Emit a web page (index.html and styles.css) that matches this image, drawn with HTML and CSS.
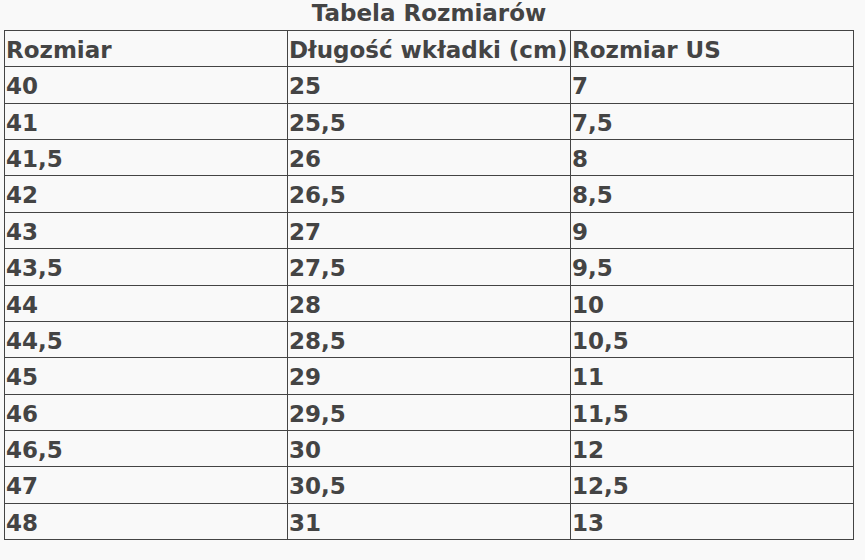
FILE: index.html
```html
<!DOCTYPE html>
<html lang="pl">
<head>
<meta charset="utf-8">
<title>Tabela Rozmiarów</title>
<link rel="stylesheet" href="styles.css">
</head>
<body>
<div class="wrap">
  <h1 class="title">Tabela Rozmiarów</h1>
  <table class="sizes">
    <thead>
      <tr><th>Rozmiar</th><th>Długość wkładki (cm)</th><th>Rozmiar US</th></tr>
    </thead>
    <tbody>
      <tr><td>40</td><td>25</td><td>7</td></tr>
      <tr><td>41</td><td>25,5</td><td>7,5</td></tr>
      <tr><td>41,5</td><td>26</td><td>8</td></tr>
      <tr><td>42</td><td>26,5</td><td>8,5</td></tr>
      <tr><td>43</td><td>27</td><td>9</td></tr>
      <tr><td>43,5</td><td>27,5</td><td>9,5</td></tr>
      <tr><td>44</td><td>28</td><td>10</td></tr>
      <tr><td>44,5</td><td>28,5</td><td>10,5</td></tr>
      <tr><td>45</td><td>29</td><td>11</td></tr>
      <tr><td>46</td><td>29,5</td><td>11,5</td></tr>
      <tr><td>46,5</td><td>30</td><td>12</td></tr>
      <tr><td>47</td><td>30,5</td><td>12,5</td></tr>
      <tr><td>48</td><td>31</td><td>13</td></tr>
    </tbody>
  </table>
</div>
</body>
</html>
```
FILE: styles.css
```css
html, body {
  margin: 0;
  padding: 0;
  background: #f9f9f9;
}
body {
  font-family: "DejaVu Sans", "Noto Sans", sans-serif;
  color: #444444;
}
.wrap {
  width: 850px;
  padding-left: 4px;
}
.title {
  margin: 0 0 3px;
  font-size: 23px;
  font-weight: bold;
  line-height: 27px;
  text-align: center;
  color: #444444;
}
.sizes {
  width: 850px;
  border-collapse: collapse;
  table-layout: fixed;
}
.sizes th,
.sizes td {
  border: 1px solid #444444;
  padding: 6px 1px 2px;
  font-size: 23px;
  font-weight: bold;
  line-height: 27.36px;
  text-align: left;
  white-space: nowrap;
  overflow: hidden;
}
```
